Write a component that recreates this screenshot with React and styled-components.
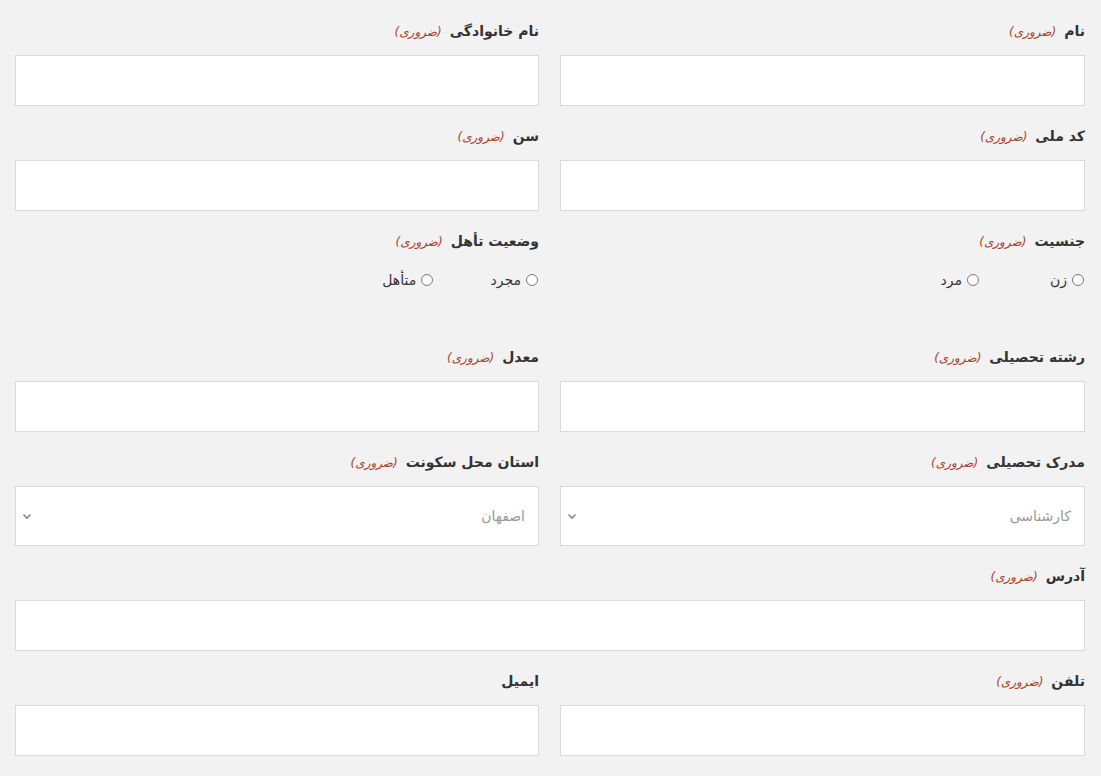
import styled, { createGlobalStyle } from "styled-components";

const GlobalStyle = createGlobalStyle`
  html, body {
    margin: 0;
    padding: 0;
    background: #f2f2f2;
  }
  body {
    font-family: "DejaVu Sans", "Noto Sans", sans-serif;
    color: #333;
  }
`;

const Form = styled.form`
  direction: rtl;
  display: grid;
  grid-template-columns: 525px 524px;
  column-gap: 21px;
  padding: 19px 16px 20px 15px;
`;

const Field = styled.div`
  grid-column: ${(p) => (p.$wide ? "1 / -1" : "auto")};
  display: flex;
  flex-direction: column;
  margin-bottom: ${(p) => p.$mb || 18}px;
`;

const Label = styled.label`
  display: flex;
  align-items: baseline;
  gap: 8px;
  height: 24px;
  line-height: 24px;
  font-size: 14px;
  font-weight: bold;
  color: #333;
  margin-bottom: 12px;
`;

const Required = styled.span`
  font-size: 12px;
  font-weight: normal;
  font-style: italic;
  color: #a9412a;
`;

const TextInput = styled.input`
  box-sizing: border-box;
  height: 51px;
  width: 100%;
  background: #fff;
  border: 1px solid #dadada;
  outline: none;
  padding: 0 12px;
  font: inherit;
`;

const SelectBox = styled.div`
  box-sizing: border-box;
  height: 60px;
  background: #fff;
  border: 1px solid #dadada;
  display: flex;
  align-items: center;
  justify-content: space-between;
  padding: 0 13px 0 5px;
  font-size: 14px;
  color: #999;
  svg {
    width: 12px;
    height: 12px;
    color: #888;
  }
`;

const RadioGroup = styled.div`
  display: flex;
  padding-top: 3px;
  height: 70px;
`;

const RadioItem = styled.label`
  width: 20%;
  display: flex;
  align-items: center;
  gap: 5px;
  height: 24px;
  font-size: 14px;
  color: #333;
`;

const Radio = styled.input.attrs({ type: "radio" })`
  appearance: none;
  margin: 0 1px 0 0;
  width: 12px;
  height: 12px;
  border-radius: 50%;
  border: 1px solid #777;
  background: #fff;
`;

const Chevron = () => (
  <svg viewBox="0 0 12 12" fill="none">
    <path d="M2.5 4.5 L6 8 L9.5 4.5" stroke="currentColor" strokeWidth="1.6" />
  </svg>
);

function TextField({ label, required = true, wide }) {
  return (
    <Field $wide={wide}>
      <Label>
        {label}
        {required && <Required>(ضروری)</Required>}
      </Label>
      <TextInput type="text" />
    </Field>
  );
}

function RadioField({ label, name, options }) {
  return (
    <Field $mb={7}>
      <Label>
        {label}
        <Required>(ضروری)</Required>
      </Label>
      <RadioGroup>
        {options.map((o) => (
          <RadioItem key={o}>
            <Radio name={name} />
            {o}
          </RadioItem>
        ))}
      </RadioGroup>
    </Field>
  );
}

function SelectField({ label, value }) {
  return (
    <Field>
      <Label>
        {label}
        <Required>(ضروری)</Required>
      </Label>
      <SelectBox>
        <span>{value}</span>
        <Chevron />
      </SelectBox>
    </Field>
  );
}

export default function App() {
  return (
    <>
      <GlobalStyle />
      <Form>
        <TextField label="نام" />
        <TextField label="نام خانوادگی" />
        <TextField label="کد ملی" />
        <TextField label="سن" />
        <RadioField label="جنسیت" name="gender" options={["زن", "مرد"]} />
        <RadioField label="وضعیت تأهل" name="marital" options={["مجرد", "متأهل"]} />
        <TextField label="رشته تحصیلی" />
        <TextField label="معدل" />
        <SelectField label="مدرک تحصیلی" value="کارشناسی" />
        <SelectField label="استان محل سکونت" value="اصفهان" />
        <TextField label="آدرس" wide />
        <TextField label="تلفن" />
        <TextField label="ایمیل" required={false} />
      </Form>
    </>
  );
}
